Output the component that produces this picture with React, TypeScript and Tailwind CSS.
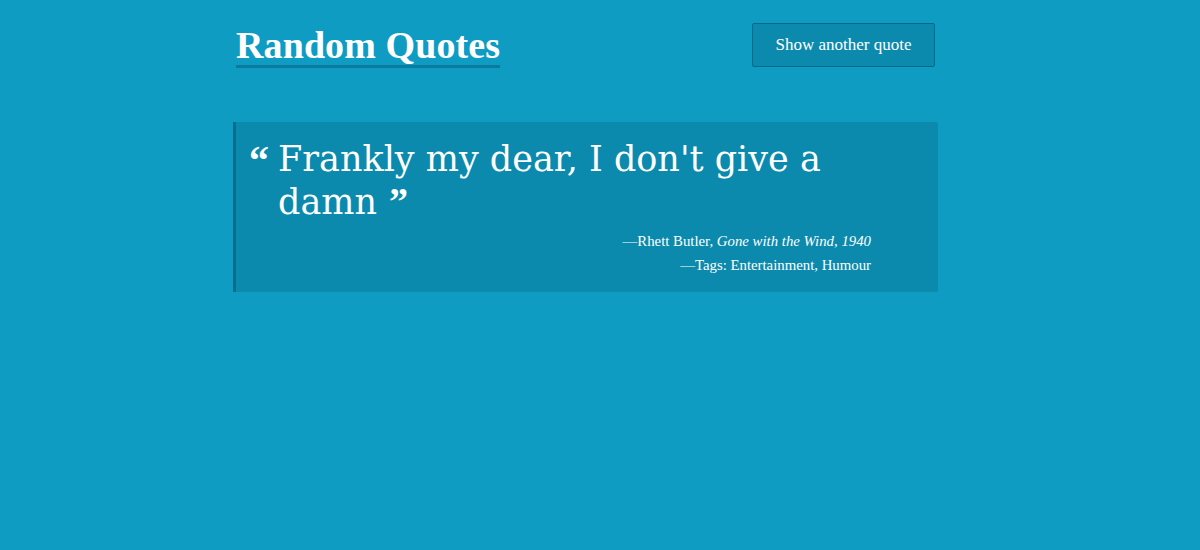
export default function App() {
  return (
    <div className="min-h-[550px] w-full bg-[#0e9cc3] text-white" style={{ fontFamily: '"Liberation Serif", "DejaVu Serif", serif' }}>
      <div className="ml-[233px] w-[705px] pl-[3px]">
        <header className="flex items-start justify-between pt-[23px]">
          <h1 className="mt-[3px] border-b-[3px] border-[#0a7b9c] pb-[1px] text-[38px] font-bold leading-[38px] tracking-[0.1px]">
            Random Quotes
          </h1>
          <button className="mr-[3px] h-[44px] w-[183px] rounded-[2px] border border-[#07698a] bg-[#0b8aad] text-[17px] text-white">
            Show another quote
          </button>
        </header>
        <blockquote className="-ml-[3px] mt-[54px] h-[170px] rounded-r-[2px] border-l-[3px] border-[#066f8f] bg-[#0b8aad] pt-[16px] pl-[13px] pr-[67px]">
          <div className="flex">
            <span className="mt-[1px] w-[29px] shrink-0 text-[40px] font-bold leading-[43px]">&ldquo;</span>
            <p className="text-[35px] leading-[43px]" style={{ fontFamily: '"DejaVu Serif", "Liberation Serif", serif' }}>
              <span>Frankly my dear, I don't give a </span>
              <span className="whitespace-nowrap">
                <span>damn</span>
                <span
                  className="ml-[12px] inline-block text-[38px] font-bold leading-none"
                  style={{ fontFamily: '"Liberation Serif", serif' }}
                >
                  &rdquo;
                </span>
              </span>
            </p>
          </div>
          <div className="mt-[5px] text-right text-[14.8px] leading-[24px]">
            <div>
              —Rhett Butler, <i>Gone with the Wind</i>, <i>1940</i>
            </div>
            <div>—Tags: Entertainment, Humour</div>
          </div>
        </blockquote>
      </div>
    </div>
  );
}
